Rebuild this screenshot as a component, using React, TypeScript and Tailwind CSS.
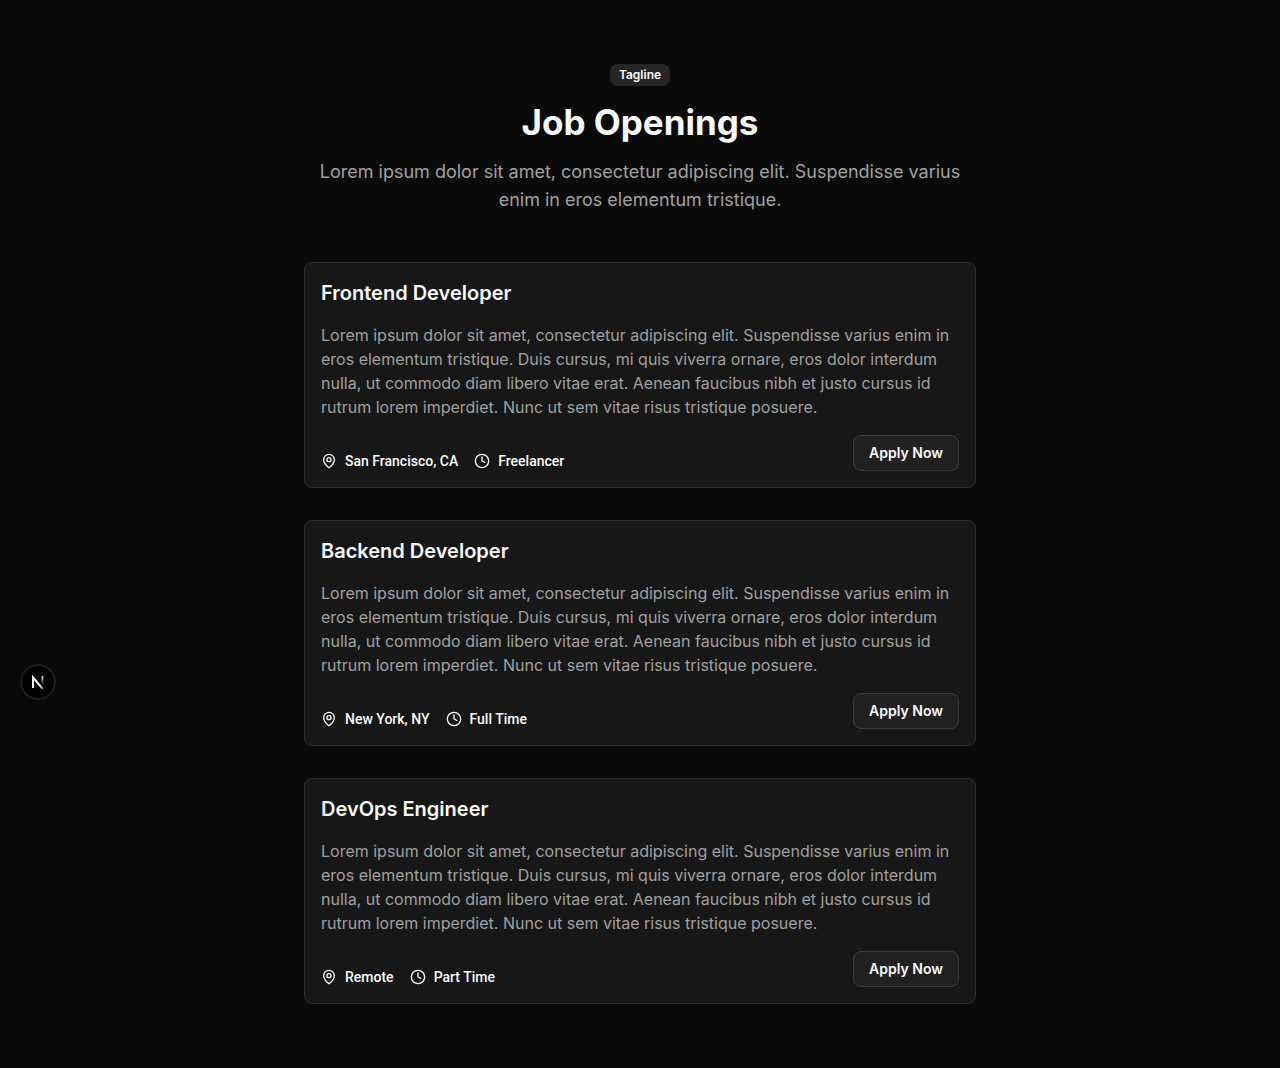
import { Clock, MapPin } from "lucide-react";

const description =
  "Lorem ipsum dolor sit amet, consectetur adipiscing elit. Suspendisse varius enim in eros elementum tristique. Duis cursus, mi quis viverra ornare, eros dolor interdum nulla, ut commodo diam libero vitae erat. Aenean faucibus nibh et justo cursus id rutrum lorem imperdiet. Nunc ut sem vitae risus tristique posuere.";

type Job = { title: string; location: string; type: string };

const jobs: Job[] = [
  { title: "Frontend Developer", location: "San Francisco, CA", type: "Freelancer" },
  { title: "Backend Developer", location: "New York, NY", type: "Full Time" },
  { title: "DevOps Engineer", location: "Remote", type: "Part Time" },
];

function JobCard({ job }: { job: Job }) {
  return (
    <article className="flex flex-col gap-4 rounded-lg border border-[#2e2e2e] bg-[#171717] p-4">
      <h2 className="text-xl font-semibold text-neutral-50">{job.title}</h2>
      <p className="text-base text-[#a1a1a1]">{description}</p>
      <div className="flex flex-wrap items-end justify-between gap-4">
        <ul className="flex flex-wrap gap-4 font-['Roboto','Liberation_Sans',sans-serif] text-sm font-medium text-neutral-50">
          <li className="flex items-center gap-2">
            <MapPin className="size-4" aria-hidden="true" />
            {job.location}
          </li>
          <li className="flex items-center gap-2">
            <Clock className="size-4" aria-hidden="true" />
            {job.type}
          </li>
        </ul>
        <button
          type="button"
          className="h-9 rounded-lg border border-[#3c3c3c] bg-[#212121] px-[15px] text-sm font-semibold text-neutral-50"
        >
          Apply Now
        </button>
      </div>
    </article>
  );
}

function DevToolsButton() {
  return (
    <button
      type="button"
      aria-label="Open Next.js Dev Tools"
      className="fixed bottom-[368px] left-5 flex size-9 items-center justify-center rounded-full border-2 border-[#1c1c1c] bg-black shadow-[0_16px_32px_-8px_rgba(0,0,0,0.24)]"
    >
      <svg width="40" height="40" viewBox="0 0 40 40" fill="none" className="shrink-0" aria-hidden="true">
        <defs>
          <linearGradient id="n-diagonal" x1="22" y1="23" x2="26" y2="28" gradientUnits="userSpaceOnUse">
            <stop stopColor="#fff" />
            <stop offset="1" stopColor="#fff" stopOpacity="0.2" />
          </linearGradient>
          <linearGradient id="n-stem" x1="24.5" y1="14" x2="24.5" y2="23" gradientUnits="userSpaceOnUse">
            <stop stopColor="#fff" />
            <stop offset="1" stopColor="#fff" stopOpacity="0" />
          </linearGradient>
        </defs>
        <path d="M15 26V15.5L24.8 27" stroke="url(#n-diagonal)" strokeWidth="2" />
        <path d="M24.5 14.2V23" stroke="url(#n-stem)" strokeWidth="1.8" />
      </svg>
    </button>
  );
}

export default function App() {
  return (
    <main className="min-h-screen bg-neutral-950 px-6 py-16 font-['Inter','Liberation_Sans',sans-serif]">
      <div className="mx-auto flex max-w-2xl flex-col gap-12">
        <header className="flex flex-col items-center gap-4 text-center">
          <span className="rounded-lg bg-neutral-800 px-[9px] py-[3px] text-xs font-semibold text-neutral-50">
            Tagline
          </span>
          <h1 className="text-[35px]/10 font-bold text-neutral-50">Job Openings</h1>
          <p className="text-lg/7 text-[#a1a1a1]">
            Lorem ipsum dolor sit amet, consectetur adipiscing elit. Suspendisse varius enim in eros elementum tristique.
          </p>
        </header>
        <section aria-label="Job openings" className="flex flex-col gap-8">
          {jobs.map((job) => (
            <JobCard key={job.title} job={job} />
          ))}
        </section>
      </div>
      <DevToolsButton />
    </main>
  );
}
